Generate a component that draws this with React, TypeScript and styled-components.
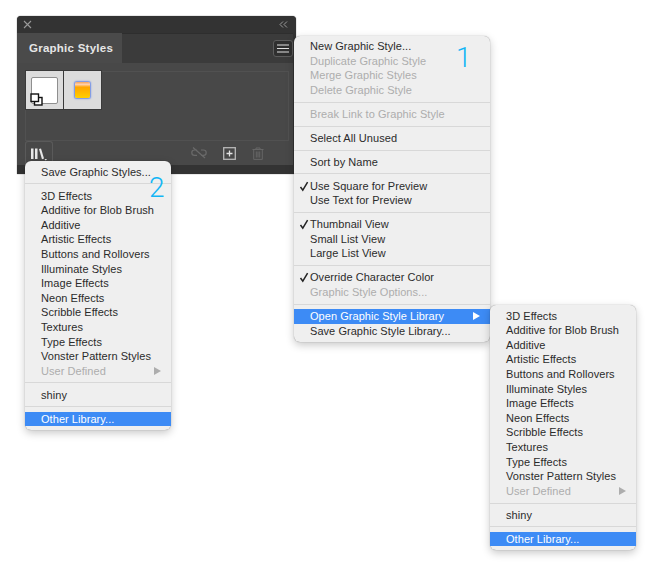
import * as React from 'react';
import styled, { createGlobalStyle } from 'styled-components';

const GlobalStyle = createGlobalStyle`
    html, body {
        margin: 0;
        background: #ffffff;
    }
`;

const Canvas = styled.div`
    position: relative;
    width: 660px;
    height: 578px;
    overflow: hidden;
    font-family: "Liberation Sans", Arial, sans-serif;
`;

// panel

const Panel = styled.div`
    position: absolute;
    left: 17px;
    top: 16px;
    width: 279px;
    height: 158px;
    display: flex;
    flex-direction: column;
    background: #333333;
    border-radius: 4px 4px 0 0;
    box-shadow: 0 0 1px #222222;
`;

const TitleBar = styled.div`
    height: 17px;
    flex: none;
    display: flex;
    align-items: center;
    justify-content: space-between;
    padding: 0 8px 0 6px;
    color: #9a9a9a;
`;

const PanelInner = styled.div`
    width: 276px;
    flex: none;
    display: flex;
    flex-direction: column;
    background: #484848;
`;

const TabStrip = styled.div`
    height: 30px;
    flex: none;
    display: flex;
    align-items: stretch;
    justify-content: space-between;
    background: #3b3b3b;
    box-shadow: inset 0 1px 0 #2e2e2e;
`;

const Tab = styled.div`
    width: 105px;
    display: flex;
    align-items: center;
    padding-left: 12px;
    box-sizing: border-box;
    background: #4a4a4a;
    color: #e6e6e6;
    font-size: 11.5px;
    font-weight: 700;
    letter-spacing: 0.25px;
`;

const MenuButton = styled.div`
    width: 18px;
    height: 15px;
    margin: 7px 0 0 0;
    display: flex;
    align-items: center;
    justify-content: center;
    background: #2f2f2f;
    border: 1px solid #5c5c5c;
    border-radius: 3px;
    color: #e0e0e0;
`;

const StyleList = styled.div`
    margin: 8px 4px 0 8px;
    height: 70px;
    flex: none;
    display: flex;
    align-items: flex-start;
    gap: 1px;
    border: 1px solid #515151;
    box-sizing: border-box;
`;

const Swatch = styled.div`
    width: 37px;
    height: 38px;
    display: flex;
    align-items: center;
    justify-content: center;
    background: #dcdcdc;
    margin-top: -1px;
    box-shadow: 0 0 0 1px #3a3a3a;
`;

const WhiteThumb = styled.div`
    position: relative;
    width: 27px;
    height: 27px;
    background: #ffffff;
    border: 1px solid #8f8f8f;
    border-radius: 2px;
    box-sizing: border-box;
`;

const LinkBadge = styled.svg`
    position: absolute;
    left: -2px;
    bottom: -3px;
`;

const GoldThumb = styled.div`
    width: 15px;
    height: 16px;
    border-radius: 2px;
    background: linear-gradient(#f5a35a 0%, #ffd0b0 15%, #ffa500 32%, #ffcf00 100%);
    box-shadow: 0 0 1.5px 0.5px #6f8fe8;
`;

const Footer = styled.div`
    height: 24px;
    flex: none;
    display: flex;
    align-items: center;
    padding: 0 29px 0 8px;
`;

const LibraryButton = styled.div`
    width: 28px;
    height: 24px;
    display: flex;
    align-items: center;
    justify-content: center;
    border: 1px solid #5a5a5a;
    border-bottom: none;
    border-radius: 3px 3px 0 0;
    box-sizing: border-box;
    margin-right: auto;
`;

const FooterIcons = styled.div`
    display: flex;
    align-items: center;
    gap: 16px;
`;

// menus

const Menu = styled.div<{ $left: number; $top: number; $width: number; $padTop: number; $z?: number }>`
    position: absolute;
    left: ${(p) => p.$left}px;
    top: ${(p) => p.$top}px;
    width: ${(p) => p.$width}px;
    z-index: ${(p) => p.$z ?? 1};
    padding: ${(p) => p.$padTop}px 0 3.4px;
    box-sizing: border-box;
    background: #efefef;
    border-radius: 6px;
    box-shadow: 0 0 1px rgba(0, 0, 0, 0.45), 0 3px 9px rgba(0, 0, 0, 0.22);
    font-size: 11px;
    letter-spacing: 0.05px;
`;

const Row = styled.div<{ $disabled?: boolean; $active?: boolean; $indent: number }>`
    position: relative;
    height: 14.6px;
    line-height: 14.6px;
    padding-left: ${(p) => p.$indent}px;
    white-space: nowrap;
    color: ${(p) => (p.$active ? '#ffffff' : p.$disabled ? '#adadad' : '#2b2b2b')};
    background: ${(p) => (p.$active ? '#3d8bf5' : 'transparent')};
`;

const Check = styled.svg`
    position: absolute;
    left: 5px;
    top: 2px;
`;

const Arrow = styled.span<{ $active?: boolean }>`
    position: absolute;
    right: 10px;
    top: 3px;
    width: 0;
    height: 0;
    border-left: 7px solid ${(p) => (p.$active ? '#ffffff' : '#adadad')};
    border-top: 4px solid transparent;
    border-bottom: 4px solid transparent;
`;

const Separator = styled.div`
    height: 1px;
    margin: 4.2px 0 4.2px;
    background: #d8d8d8;
`;

const Callout = styled.div<{ $left: number; $top: number }>`
    position: absolute;
    left: ${(p) => p.$left}px;
    top: ${(p) => p.$top}px;
    z-index: 3;
    color: #12b5f5;
    font-family: Roboto, sans-serif;
    font-weight: 300;
    font-size: 28px;
    line-height: 30px;
`;

type Item = { label: string; disabled?: boolean; checked?: boolean; active?: boolean; arrow?: boolean } | '-';

const libraryItems: Item[] = [
    { label: '3D Effects' },
    { label: 'Additive for Blob Brush' },
    { label: 'Additive' },
    { label: 'Artistic Effects' },
    { label: 'Buttons and Rollovers' },
    { label: 'Illuminate Styles' },
    { label: 'Image Effects' },
    { label: 'Neon Effects' },
    { label: 'Scribble Effects' },
    { label: 'Textures' },
    { label: 'Type Effects' },
    { label: 'Vonster Pattern Styles' },
    { label: 'User Defined', disabled: true, arrow: true },
    '-',
    { label: 'shiny' },
    '-',
    { label: 'Other Library...', active: true },
];

const panelMenuItems: Item[] = [
    { label: 'New Graphic Style...' },
    { label: 'Duplicate Graphic Style', disabled: true },
    { label: 'Merge Graphic Styles', disabled: true },
    { label: 'Delete Graphic Style', disabled: true },
    '-',
    { label: 'Break Link to Graphic Style', disabled: true },
    '-',
    { label: 'Select All Unused' },
    '-',
    { label: 'Sort by Name' },
    '-',
    { label: 'Use Square for Preview', checked: true },
    { label: 'Use Text for Preview' },
    '-',
    { label: 'Thumbnail View', checked: true },
    { label: 'Small List View' },
    { label: 'Large List View' },
    '-',
    { label: 'Override Character Color', checked: true },
    { label: 'Graphic Style Options...', disabled: true },
    '-',
    { label: 'Open Graphic Style Library', active: true, arrow: true },
    { label: 'Save Graphic Style Library...' },
];

const MenuRows = ({ items, indent }: { items: Item[]; indent: number }) => (
    <>
        {items.map((item, i) =>
            item === '-' ? (
                <Separator key={i} />
            ) : (
                <Row key={i} $disabled={item.disabled} $active={item.active} $indent={indent}>
                    {item.checked && (
                        <Check width="10" height="11" viewBox="0 0 10 11">
                            <path d="M1.5 6 L3.8 9.2 L8.6 1.2" fill="none" stroke="#222" strokeWidth="1.5" />
                        </Check>
                    )}
                    {item.label}
                    {item.arrow && <Arrow $active={item.active} />}
                </Row>
            )
        )}
    </>
);

const App = () => {
    return (
        <Canvas>
            <GlobalStyle />
            <Panel>
                <TitleBar>
                    <svg width="9" height="9" viewBox="0 0 9 9">
                        <path d="M1 1 L8 8 M8 1 L1 8" stroke="#9a9a9a" strokeWidth="1.1" />
                    </svg>
                    <svg width="9" height="7" viewBox="0 0 9 7">
                        <path d="M4 0.5 L1 3.5 L4 6.5 M8 0.5 L5 3.5 L8 6.5" fill="none" stroke="#9a9a9a" strokeWidth="1" />
                    </svg>
                </TitleBar>
                <PanelInner>
                    <TabStrip>
                        <Tab>Graphic Styles</Tab>
                        <MenuButton>
                            <svg width="12" height="9" viewBox="0 0 12 9">
                                <path d="M0 1 H12 M0 4.5 H12 M0 8 H12" stroke="#e0e0e0" strokeWidth="1.2" />
                            </svg>
                        </MenuButton>
                    </TabStrip>
                    <StyleList>
                        <Swatch>
                            <WhiteThumb>
                                <LinkBadge width="13" height="13" viewBox="0 0 13 13">
                                    <rect x="4.5" y="4.5" width="7.5" height="7.5" fill="#fff" stroke="#111" strokeWidth="1.4" />
                                    <rect x="1" y="1" width="7.5" height="7.5" fill="#fff" stroke="#111" strokeWidth="1.4" />
                                </LinkBadge>
                            </WhiteThumb>
                        </Swatch>
                        <Swatch>
                            <GoldThumb />
                        </Swatch>
                    </StyleList>
                    <Footer>
                        <LibraryButton>
                            <svg width="18" height="14" viewBox="0 0 18 14">
                                <path d="M1 1.5 H3.5 V12 H1 Z M5 1.5 H7.5 V12 H5 Z" fill="#e8e8e8" />
                                <path d="M9 2 L11 1.4 L14 11.6 L12 12.2 Z" fill="#e8e8e8" />
                                <path d="M14.5 12 H17 L15.75 13.5 Z" fill="#e8e8e8" />
                            </svg>
                        </LibraryButton>
                        <FooterIcons>
                            <svg width="16" height="14" viewBox="0 0 16 14">
                                <path d="M6 4 H3.5 A2.7 2.7 0 0 0 3.5 9.4 H6 M10 4 H12.5 A2.7 2.7 0 0 1 12.5 9.4 H10 M2 1.5 L14 12" fill="none" stroke="#6a6a6a" strokeWidth="1.2" />
                            </svg>
                            <svg width="13" height="13" viewBox="0 0 13 13">
                                <rect x="0.7" y="0.7" width="11.6" height="11.6" fill="none" stroke="#b8b8b8" strokeWidth="1.3" />
                                <path d="M6.5 3.5 V9.5 M3.5 6.5 H9.5" stroke="#e4e4e4" strokeWidth="1.3" />
                            </svg>
                            <svg width="12" height="13" viewBox="0 0 12 13">
                                <path d="M0.5 2.5 H11.5 M4 2.5 V1 H8 V2.5 M1.7 2.5 V12.4 H10.3 V2.5 M4.3 4.5 V10.5 M6 4.5 V10.5 M7.7 4.5 V10.5" fill="none" stroke="#666" strokeWidth="1" />
                            </svg>
                        </FooterIcons>
                    </Footer>
                </PanelInner>
            </Panel>

            <Menu $left={294} $top={36} $width={196} $padTop={3}>
                <MenuRows items={panelMenuItems} indent={16} />
            </Menu>
            <Callout $left={456} $top={43}>1</Callout>

            <Menu $left={25} $top={161} $width={146} $padTop={3.6} $z={2}>
                <MenuRows items={[{ label: 'Save Graphic Styles...' }, '-', ...libraryItems]} indent={16} />
            </Menu>
            <Callout $left={149} $top={173}>2</Callout>

            <Menu $left={490} $top={305} $width={146} $padTop={3.6} $z={2}>
                <MenuRows items={libraryItems} indent={16} />
            </Menu>
        </Canvas>
    );
};

export default App;
